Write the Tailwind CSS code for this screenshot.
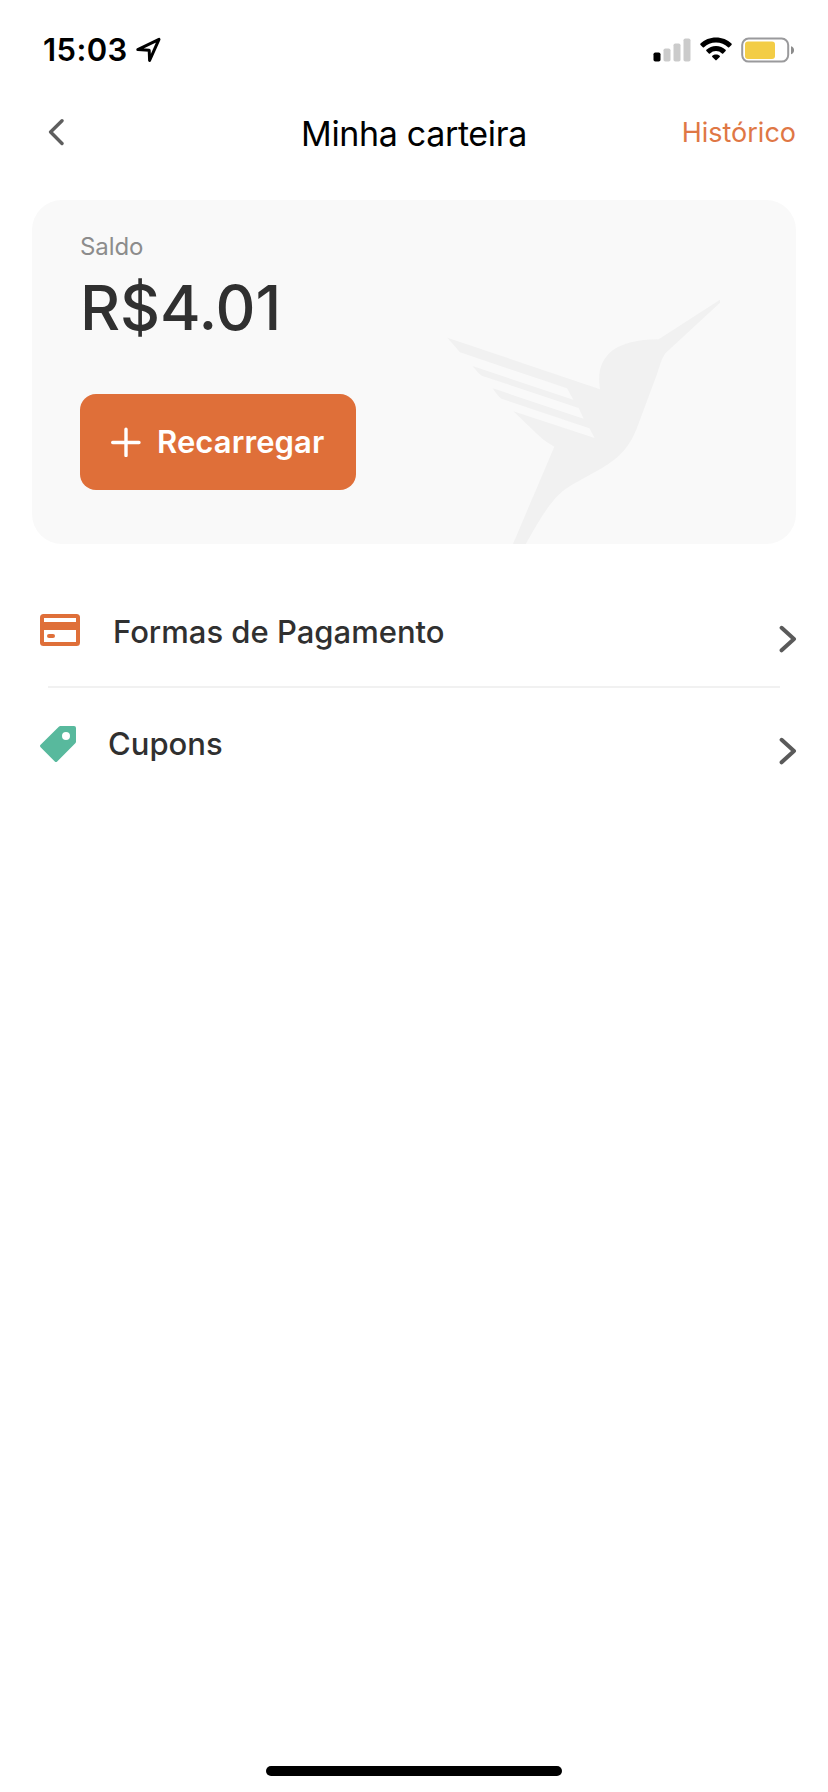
<!DOCTYPE html>
<html lang="pt-BR">
<head>
<meta charset="utf-8">
<title>Minha carteira</title>
<script src="https://cdn.jsdelivr.net/npm/@tailwindcss/browser@4"></script>
</head>
<body class="bg-white">
<div class="flex h-[1792px] w-[828px] flex-col overflow-hidden bg-white font-['Inter',sans-serif]">
  <!-- Status bar -->
  <div class="flex h-[100px] items-center justify-between pl-[43px] pr-[33px]">
    <div class="flex items-center gap-[8px]">
      <span class="w-[85px] whitespace-nowrap pb-[2px] text-[31px] font-semibold leading-none tracking-[0.4px] text-black">15:03</span>
      <svg class="h-[26px] w-[26px]" viewBox="0 0 26 26" fill="none" stroke="#000" stroke-width="3" stroke-linejoin="round"><path d="M1.8 12.6 23 2.4 13.6 23.4 13.2 13.2Z"/></svg>
    </div>
    <div class="flex items-center">
      <svg class="h-[26px] w-[38px]" viewBox="0 0 38 26"><rect x="0.5" y="15.5" width="7" height="9" rx="1.8" fill="#000"/><g fill="#cbcbcb"><rect x="10.5" y="11.5" width="7" height="13" rx="1.8"/><rect x="20.5" y="6.5" width="7" height="18" rx="1.8"/><rect x="30.5" y="1.5" width="7" height="23" rx="1.8"/></g></svg>
      <svg class="ml-[9px] h-[26px] w-[32px]" viewBox="0 0 32 26"><path fill="#000" d="M16 .5C22.100 .5 27.500 2.800 31.500 6.600c.4.4.4.9 0 1.300l-2.300 2.300c-.4.4-.8.4-1.200 0C24.900 7.300 20.700 5.500 16 5.500S7.100 7.300 4 10.200c-.4.4-.8.4-1.200 0L.5 7.900c-.4-.4-.4-.9 0-1.300C4.500 2.800 9.900.5 16 .5ZM16 9c3.700 0 7 1.400 9.600 3.800.4.4.4.8 0 1.200l-2.400 2.400c-.4.4-.8.4-1.200 0A8.700 8.700 0 0 0 16 14a8.700 8.700 0 0 0-6 2.400c-.4.4-.8.4-1.200 0L6.400 14c-.4-.4-.4-.8 0-1.200A14 14 0 0 1 16 9ZM16 17.400c1.400 0 2.700.5 3.700 1.300.4.4.4.8 0 1.200l-3.100 3.200c-.4.4-.8.4-1.200 0l-3.100-3.200c-.4-.4-.4-.8 0-1.200 1-.8 2.300-1.300 3.700-1.300Z"/></svg>
      <svg class="ml-[9px] h-[26px] w-[54px]" viewBox="0 0 54 26"><rect x="1.200" y="1.600" width="46" height="23" rx="6.500" fill="none" stroke="#9a9a9c" stroke-width="2"/><rect x="4" y="4.500" width="30" height="17.500" rx="3" fill="#f3cd46"/><path d="M50 9.300c2 .6 3 2 3 4s-1 3.400-3 4Z" fill="#8c8c8c"/></svg>
    </div>
  </div>

  <!-- Title bar -->
  <header class="mb-[34px] grid h-[66px] grid-cols-[1fr_auto_1fr] items-center px-[32px]">
    <svg class="ml-[16px] h-[28px] w-[17px]" viewBox="0 0 17 28" fill="none" stroke="#5e5e5e" stroke-width="3.400" stroke-linecap="round" stroke-linejoin="round"><path d="M14 1.800 2.600 13 14 24.500"/></svg>
    <h1 class="whitespace-nowrap pt-px text-[34px] leading-none tracking-[-0.35px] text-black">Minha carteira</h1>
    <span class="justify-self-end whitespace-nowrap pb-[2px] text-[27px] leading-none tracking-[0px] text-[#df7745]">Histórico</span>
  </header>

  <!-- Balance card -->
  <section class="mx-[32px] flex h-[344px] justify-between overflow-hidden rounded-[30px] bg-[#f9f9f9] pl-[48px]">
    <div class="flex flex-col items-start pt-[32px]">
      <span class="text-[24px] leading-[30px] tracking-[-0.1px] text-[#8c8c8c]">Saldo</span>
      <strong class="mt-[8px] whitespace-nowrap text-[62px] font-medium leading-[75px] tracking-[-0.1px] text-[#303030]">R$4.01</strong>
      <button class="mt-[49px] flex h-[96px] w-[276px] items-center rounded-[16px] bg-[#df6f39] pl-[31px] text-white">
        <svg class="h-[30px] w-[30px]" viewBox="0 0 30 30" fill="none" stroke="#fff" stroke-width="3.400" stroke-linecap="round"><path d="M1.700 15.500H28M15 2.200V28.500"/></svg>
        <span class="ml-[16px] whitespace-nowrap pb-[2px] text-[31px] font-semibold leading-none tracking-[0.1px]">Recarregar</span>
      </button>
    </div>
    <svg class="mr-[56px] mt-[80px] h-[264px] w-[310px] shrink-0" viewBox="0 0 930 792" fill="#f1f1f1"><path d="M52 173 510 328C496 240 540 178 686 178L870 59V68L707 219C695 234 692 250 680 285L626 430C600 505 565 535 515 565L430 612C370 645 340 700 286 794H248L373 500C335 480 325 465 250 394L494 474 478 445 214 356C205 350 197 338 188 325L461 416 446 384 155 287C145 280 138 270 127 258L430 359 411 325 90 217Z"/></svg>
  </section>

  <!-- Options -->
  <nav class="flex flex-col text-[31px] font-medium leading-none text-[#303030]">
    <a class="mt-[54px] flex h-[88px] items-start pl-[40px] pr-[31px]">
      <svg class="mt-[16px] h-[32px] w-[40px]" viewBox="0 0 40 32"><rect width="40" height="32" rx="3.500" fill="#df6f39"/><path fill="#fff" d="M4 4h32v4H4zM4 16h32v12H4z"/><rect x="7" y="20" width="8" height="4" rx="2" fill="#df6f39"/></svg>
      <span class="ml-[33px] mt-[18px] whitespace-nowrap">Formas de Pagamento</span>
      <svg class="ml-auto mt-[27px] h-[28px] w-[18px]" viewBox="0 0 18 28" fill="none" stroke="#5a5a5a" stroke-width="4" stroke-linecap="round" stroke-linejoin="round"><path d="M2.600 2.800 15 14 2.600 25.300"/></svg>
    </a>
    <div class="ml-[48px] mr-[48px] h-[2px] bg-[#f1f1f1]"></div>
    <a class="flex h-[100px] items-start pl-[40px] pr-[31px]">
      <svg class="mt-[38px] h-[36px] w-[36px]" viewBox="0 0 36 36"><path fill="#58b99d" fill-rule="evenodd" d="M20.500 0H34a2 2 0 0 1 2 2V15.500q0 1-.7 1.700L17.200 35.400q-1.200 1.200-2.400 0L.6 21.200q-1.200-1.200 0-2.400L18.800.7Q19.500 0 20.500 0ZM26 6a4 4 0 1 0 0 8 4 4 0 0 0 0-8Z"/></svg>
      <span class="ml-[32px] mt-[40px] whitespace-nowrap">Cupons</span>
      <svg class="ml-auto mt-[49px] h-[28px] w-[18px]" viewBox="0 0 18 28" fill="none" stroke="#5a5a5a" stroke-width="4" stroke-linecap="round" stroke-linejoin="round"><path d="M2.600 2.800 15 14 2.600 25.300"/></svg>
    </a>
  </nav>

  <!-- Home indicator -->
  <div class="mx-auto mb-[16px] mt-auto h-[10px] w-[296px] rounded-full bg-black"></div>
</div>
</body>
</html>
